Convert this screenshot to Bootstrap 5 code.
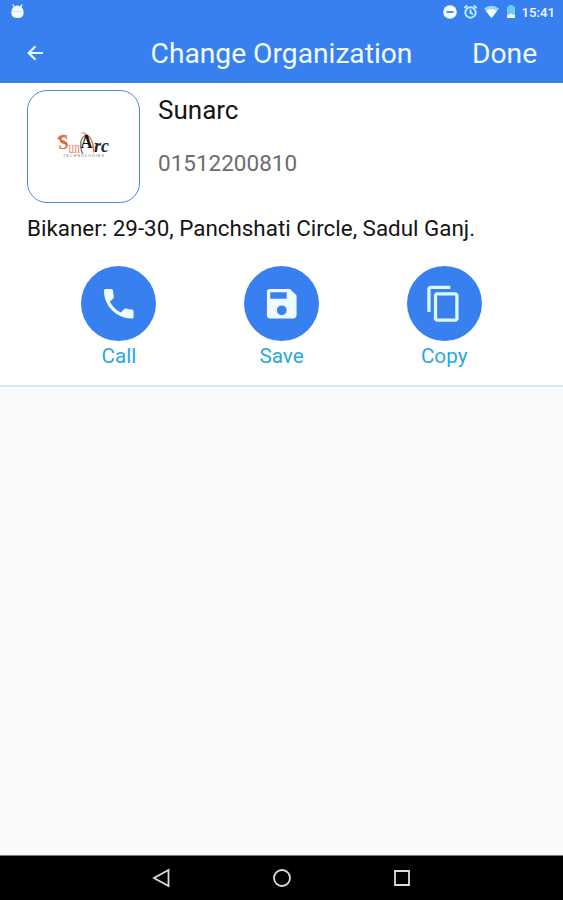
<!DOCTYPE html>
<html lang="en">
<head>
<meta charset="utf-8">
<meta name="viewport" content="width=device-width, initial-scale=1">
<title>Change Organization</title>
<link href="https://cdn.jsdelivr.net/npm/bootstrap@5.3.0/dist/css/bootstrap.min.css" rel="stylesheet">
<style>
body{font-family:Roboto,"Liberation Sans",sans-serif;background:#fafafa;color:#151515;overflow:hidden}
svg{display:block}
.brand-bg{background:#3880ef;color:#f2fbff}
.status{height:24px;padding:0 8px 0 10px;font-size:13.2px;font-weight:500;line-height:25px}
.appbar{height:59px;padding:0 26px 0 26px}
.appbar h1,.appbar button{font-size:28.2px;font-weight:400;line-height:59px}
.appbar button{color:inherit;width:65px}
.details{height:304px;border-bottom:2px solid #d6e9f7;padding-top:7px}
.profile{padding-left:26.5px}
.profile-text{padding-left:18.5px}
.logo-box{width:113px;height:113px;border:1.5px solid #4a87df;border-radius:20px}
.logo-box svg{margin-bottom:6px}
.org-name{font-size:26px;line-height:30px;margin:5px 0 0}
.phone{font-size:22.5px;line-height:28px;color:#6c6c6c;margin-top:24px}
.address{font-size:22.4px;line-height:28px;margin:11px 27px 0}
.actions{margin:24px 37.5px 0}
.round{width:75px;height:75px;background:#3880ef}
.act{color:#2aa6e4;font-size:20.7px;line-height:31px}
.sysnav{height:45px;background:#000;border-top:1px solid #777}
.sysnav svg{margin:0 50px}
</style>
<script src="https://cdn.jsdelivr.net/npm/bootstrap@5.3.0/dist/js/bootstrap.bundle.min.js"></script>
</head>
<body class="vh-100 d-flex flex-column">
<header class="brand-bg">
  <div class="status d-flex align-items-center justify-content-between">
    <svg width="15" height="16" viewBox="0 0 15 16" fill="#f4fcff"><path d="M3 0l1.500 2.200Q7.500 1 10 2.200L12 0l.6.5-1.100 2.600Q13.700 5 13.700 8.500q0 5.500-6.200 5.500T1.300 8.500q0-3.500 2.200-5.400L2.400.5z"/><path d="M3 7.500h9" stroke="#bcdcf8" stroke-width=".8"/></svg>
    <div class="d-flex align-items-center">
      <svg width="80" height="24" viewBox="0 0 80 24">
        <circle cx="8" cy="12" r="6.800" fill="#f7fdff"/><path d="M4.500 12h7" stroke="#4e91ec" stroke-width="2"/>
        <g fill="none" stroke="#b9f1fb" stroke-width="1.900"><circle cx="28.500" cy="12.500" r="5.200"/><path d="M28.500 9.500v3.500l2.500 1.200M22.300 8l3-2.500M34.700 8l-3-2.500"/></g>
        <path d="M42 8.500Q49.500 3 57 8.500L49.500 18z" fill="#8fdcf8"/><path d="M44 11q5.500-3.500 11 0L49.500 18z" fill="#fff"/>
        <path d="M65 6.500h2V5h4v1.500h2V18h-8z" fill="#69cdf0"/><path d="M65 15l4-1.500 4 1.500v3h-8z" fill="#effcff"/>
      </svg>
      <span>15:41</span>
    </div>
  </div>
  <div class="appbar d-flex align-items-center justify-content-between">
    <svg width="65" height="22" viewBox="0 0 65 22" fill="none" stroke="#e9f7ff" stroke-width="2.200"><path d="M17 10H3M9.500 3.200L2.700 10l6.800 6.800"/></svg>
    <h1 class="m-0">Change Organization</h1>
    <button class="btn p-0 border-0 text-end">Done</button>
  </div>
</header>
<main class="flex-grow-1">
  <section class="details bg-white">
    <div class="profile d-flex">
      <div class="logo-box d-flex align-items-center justify-content-center flex-shrink-0">
        <svg width="58" height="34" viewBox="0 0 58 34" font-family="Liberation Serif, serif">
          <path d="M3 12q3-6 12-3.500q-7-.5-9 4z" fill="#e0673a"/>
          <text x="4.500" y="22" font-size="19" font-weight="bold" fill="#e0673a" textLength="10" lengthAdjust="spacingAndGlyphs">S</text>
          <text x="14.500" y="25.500" font-size="16" fill="#ea8860" textLength="11.500" lengthAdjust="spacingAndGlyphs">un</text>
          <path d="M28.500 27Q23.500 12 32 8" fill="none" stroke="#777" stroke-width="1.300"/>
          <path d="M26 5q8 0 12 8 4 8 1 14 0-10-3-15-4-5-10-7z" fill="#e97550"/>
          <text x="26.500" y="21" font-size="18" font-weight="bold" fill="#151515" textLength="12" lengthAdjust="spacingAndGlyphs">A</text>
          <text x="40" y="25" font-size="18" font-style="italic" font-weight="bold" fill="#242424" textLength="15" lengthAdjust="spacingAndGlyphs">rc</text>
          <text x="9" y="30" font-size="3.800" font-family="Liberation Sans" fill="#777" textLength="41">TECHNOLOGIES</text>
        </svg>
      </div>
      <div class="profile-text">
        <h2 class="org-name fw-normal">Sunarc</h2>
        <div class="phone">01512200810</div>
      </div>
    </div>
    <p class="address text-nowrap">Bikaner: 29-30, Panchshati Circle, Sadul Ganj.</p>
    <div class="actions row g-0 text-center">
      <div class="col act"><div class="round rounded-circle d-flex align-items-center justify-content-center mx-auto"><svg width="39.500" height="39.500" viewBox="0 0 24 24" fill="#effcff"><path d="M6.620 10.790c1.440 2.830 3.760 5.140 6.590 6.590l2.200-2.200c.27-.27.67-.36 1.020-.24 1.120.37 2.330.57 3.570.57.550 0 1 .45 1 1V20c0 .550-.450 1-1 1C10.610 21 3 13.390 3 4c0-.550.450-1 1-1h3.500c.550 0 1 .45 1 1 0 1.250.2 2.450.57 3.570.11.350.03.740-.25 1.020z"/></svg></div>Call</div>
      <div class="col act"><div class="round rounded-circle d-flex align-items-center justify-content-center mx-auto"><svg width="39.500" height="39.500" viewBox="0 0 24 24" fill="#effcff"><path d="M17 3H5a2 2 0 0 0-2 2v14a2 2 0 0 0 2 2h14c1.100 0 2-.9 2-2V7zM12 19a3 3 0 1 1 0-6 3 3 0 0 1 0 6zM15 9H5V5h10z"/></svg></div>Save</div>
      <div class="col act"><div class="round rounded-circle d-flex align-items-center justify-content-center mx-auto"><svg width="39.500" height="39.500" viewBox="0 0 24 24" fill="#dcf8ff"><path d="M16 1H4c-1.100 0-2 .9-2 2v14h2V3h12zM19 5H8c-1.100 0-2 .9-2 2v14c0 1.100.9 2 2 2h11c1.100 0 2-.9 2-2V7c0-1.100-.9-2-2-2zm0 16H8V7h11z"/></svg></div>Copy</div>
    </div>
  </section>
</main>
<footer class="sysnav d-flex align-items-center justify-content-center">
  <svg width="20" height="20" viewBox="0 0 20 20" fill="none" stroke="#ddd" stroke-width="1.800"><path d="M16.500 2v16L2 10z"/></svg>
  <svg width="20" height="20" viewBox="0 0 20 20" fill="none" stroke="#ddd" stroke-width="1.800"><circle cx="10" cy="10" r="8"/></svg>
  <svg width="20" height="20" viewBox="0 0 20 20" fill="none" stroke="#ddd" stroke-width="1.800"><path d="M3 3h14v14H3z"/></svg>
</footer>
</body>
</html>
